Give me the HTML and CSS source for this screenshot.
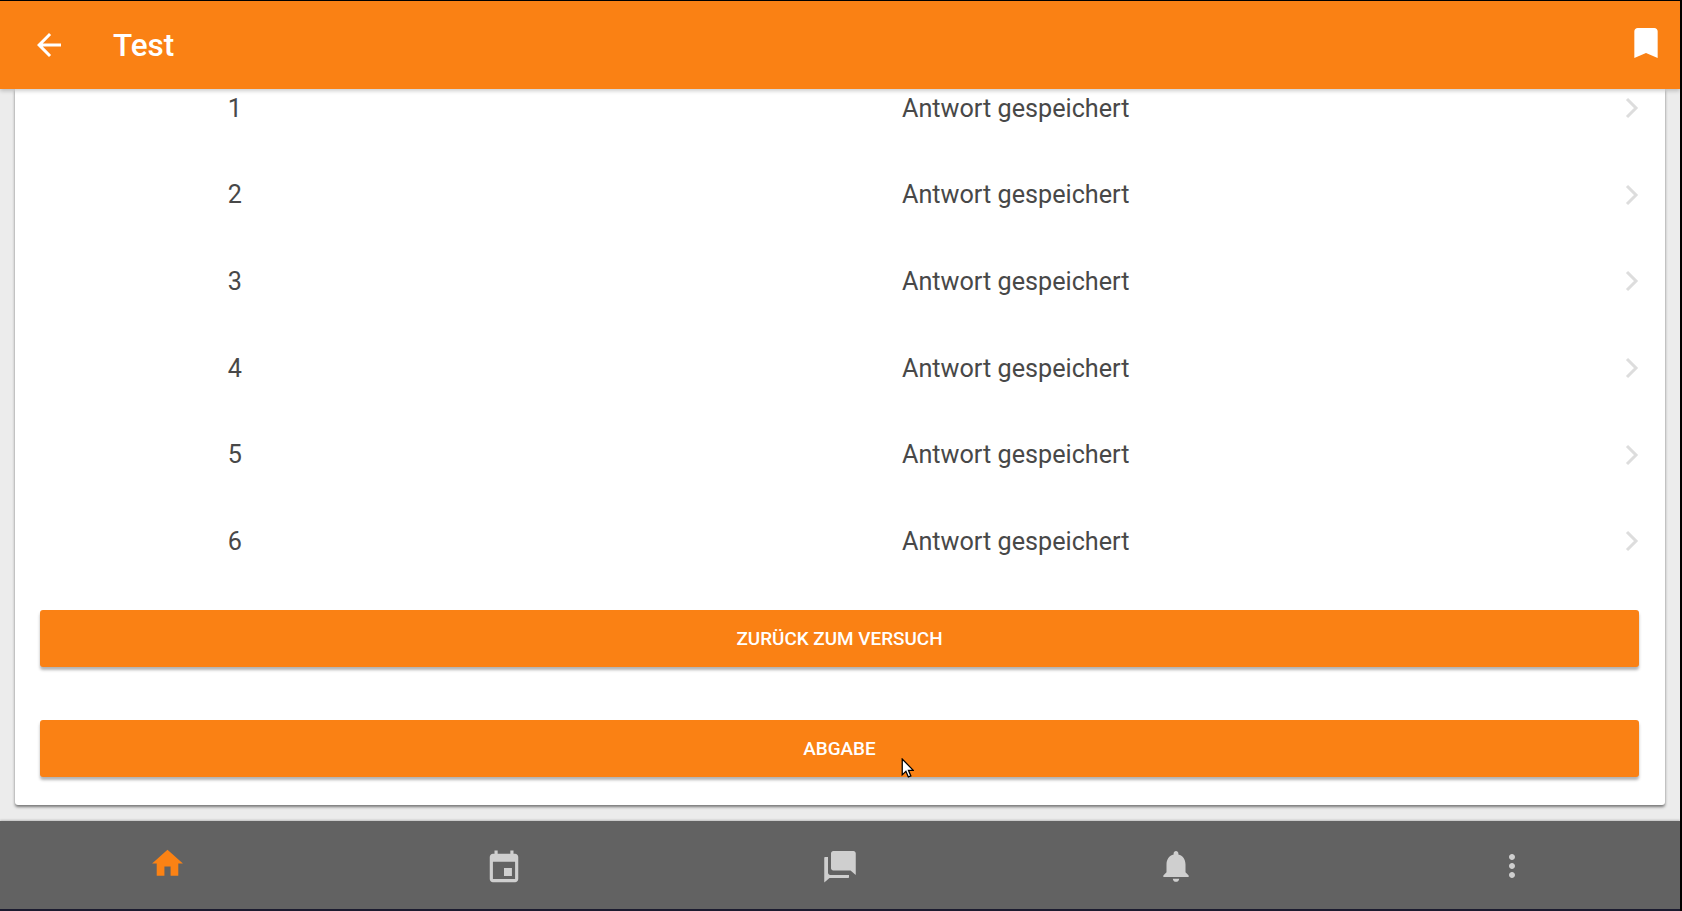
FILE: index.html
```html
<!DOCTYPE html>
<html lang="en">
<head>
    <meta charset="UTF-8">
    <meta name="viewport" content="width=device-width, initial-scale=1.0">
    <title>Test</title>
    <link rel="stylesheet" href="styles.css">
</head>
<body>
    <div class="screen">
        <div class="title-bar">
            <svg class="back-icon" viewBox="0 0 24 24"><path d="M20 11H7.830l5.590-5.590L12 4l-8 8 8 8 1.410-1.410L7.830 13H20v-2z"/></svg>
            <span class="title-text">Test</span>
            <svg class="bookmark-icon" viewBox="0 0 24 24"><path d="M17 3H7c-1.100 0-2 .9-2 2v16l7-3 7 3V5c0-1.100-.9-2-2-2z"/></svg>
        </div>

        <div class="content">
            <div class="card">
                <div class="row">
                    <span class="row-num">1</span>
                    <span class="row-status">Antwort gespeichert</span>
                    <svg class="chevron" viewBox="0 0 16 24"><path d="M3 3l9 9-9 9"/></svg>
                </div>
                <div class="row">
                    <span class="row-num">2</span>
                    <span class="row-status">Antwort gespeichert</span>
                    <svg class="chevron" viewBox="0 0 16 24"><path d="M3 3l9 9-9 9"/></svg>
                </div>
                <div class="row">
                    <span class="row-num">3</span>
                    <span class="row-status">Antwort gespeichert</span>
                    <svg class="chevron" viewBox="0 0 16 24"><path d="M3 3l9 9-9 9"/></svg>
                </div>
                <div class="row">
                    <span class="row-num">4</span>
                    <span class="row-status">Antwort gespeichert</span>
                    <svg class="chevron" viewBox="0 0 16 24"><path d="M3 3l9 9-9 9"/></svg>
                </div>
                <div class="row">
                    <span class="row-num">5</span>
                    <span class="row-status">Antwort gespeichert</span>
                    <svg class="chevron" viewBox="0 0 16 24"><path d="M3 3l9 9-9 9"/></svg>
                </div>
                <div class="row">
                    <span class="row-num">6</span>
                    <span class="row-status">Antwort gespeichert</span>
                    <svg class="chevron" viewBox="0 0 16 24"><path d="M3 3l9 9-9 9"/></svg>
                </div>
                <button class="action-button first">ZURÜCK ZUM VERSUCH</button>
                <button class="action-button">ABGABE</button>
            </div>
        </div>

        <div class="tab-bar">
            <div class="tab"><svg class="tab-icon active" viewBox="0 0 24 24"><path d="M10 20v-6h4v6h5v-8h3L12 3 2 12h3v8z"/></svg></div>
            <div class="tab"><svg class="tab-icon calendar" viewBox="0 0 24 24"><path d="M17 12h-5v5h5v-5zM16 1v2H8V1H6v2H5c-1.110 0-1.990.9-1.990 2L3 19c0 1.100.89 2 2 2h14c1.100 0 2-.9 2-2V5c0-1.100-.9-2-2-2h-1V1h-2zm3 18H5V8h14v11z"/></svg></div>
            <div class="tab"><svg class="tab-icon chat" viewBox="0 0 24 24"><path d="M6 3.500c0-.8.7-1.500 1.500-1.500H21c.8 0 1.500.7 1.500 1.500V18L19 15H7.500C6.700 15 6 14.300 6 13.500zM4 6v10.500c0 .8.7 1.500 1.500 1.500H18v1.500c0 .3-.2.5-.5.500H5l-3.500 3V6.500c0-.3.2-.5.5-.5z"/></svg></div>
            <div class="tab"><svg class="tab-icon bell" viewBox="0 0 24 24"><path d="M12 22c1.100 0 2-.9 2-2h-4c0 1.100.9 2 2 2zm6-6v-5c0-3.070-1.630-5.640-4.500-6.320V4c0-.83-.67-1.500-1.500-1.500s-1.500.67-1.500 1.500v.68C7.640 5.360 6 7.920 6 11v5l-2 2v1h16v-1l-2-2z"/></svg></div>
            <div class="tab"><svg class="tab-icon" viewBox="0 0 24 24"><path d="M12 8c1.100 0 2-.9 2-2s-.9-2-2-2-2 .9-2 2 .9 2 2 2zm0 2c-1.100 0-2 .9-2 2s.9 2 2 2 2-.9 2-2-.9-2-2-2zm0 6c-1.100 0-2 .9-2 2s.9 2 2 2 2-.9 2-2-.9-2-2-2z"/></svg></div>
        </div>

        <svg class="cursor" viewBox="0 0 12 19"><path d="M1 1v15l3.500-3.400 2.300 5.400 2.400-1-2.300-5.300H11.500z"/></svg>
    </div>
</body>
</html>
```

FILE: styles.css
```css
* {
    margin: 0;
    padding: 0;
    box-sizing: border-box;
}
body {
    font-family: 'Roboto', sans-serif;
    background-color: #000;
    height: 100vh;
    overflow: hidden;
}
.screen {
    position: relative;
    display: flex;
    flex-direction: column;
    width: 1680px;
    height: 910px;
    margin-top: 1px;
    background-color: #ececec;
    border-bottom: 2px solid #1c1c30;
}
.title-bar {
    display: flex;
    align-items: center;
    flex: 0 0 88px;
    padding: 0 14px 0 31px;
    background-color: #fa8114;
    color: #fff;
    box-shadow: 0 2px 4px rgba(0, 0, 0, 0.2);
    z-index: 2;
}
.back-icon {
    width: 36px;
    height: 36px;
    fill: #fff;
}
.title-text {
    margin-left: 46px;
    font-size: 31.5px;
    font-weight: 500;
    flex: 1;
}
.bookmark-icon {
    width: 40px;
    height: 40px;
    margin-top: -5px;
    fill: #fff;
}
.content {
    flex: 1;
    overflow: hidden;
    padding: 0 15px;
}
.card {
    display: flow-root;
    height: 716px;
    padding: 0 26px 0 25px;
    background-color: #fff;
    border-radius: 0 0 3px 3px;
    box-shadow: 0 2px 3px rgba(0, 0, 0, 0.5);
}
.row {
    display: flex;
    align-items: center;
    height: 86.6px;
    color: #484848;
    font-size: 25.2px;
}
.row:first-child {
    margin-top: -24px;
}
.row-num {
    width: 202px;
    margin-right: 660px;
    text-align: right;
}
.row-status {
    flex: 1;
}
.chevron {
    width: 16px;
    height: 24px;
    margin-right: -1px;
    fill: none;
    stroke: #ddd;
    stroke-width: 3;
}
.action-button {
    display: block;
    width: 100%;
    height: 57px;
    margin-top: 53px;
    background-color: #fa8114;
    color: #fff;
    border: none;
    border-radius: 3px;
    font-family: inherit;
    font-size: 18.900px;
    font-weight: 500;
    box-shadow: 0 3px 3px rgba(0, 0, 0, 0.3);
}
.action-button.first {
    margin-top: 25px;
}
.tab-bar {
    display: flex;
    flex: 0 0 88px;
    align-items: center;
    padding-top: 2px;
    background-color: #626262;
    box-shadow: 0 -1px 2px rgba(0, 0, 0, 0.2);
}
.tab {
    flex: 1;
    display: flex;
    justify-content: center;
}
.tab-icon {
    width: 36px;
    height: 36px;
    fill: #cfcfcf;
}
.tab-icon.active {
    width: 37px;
    height: 37px;
    fill: #fb8214;
    transform: translate(-1px, -3px);
}
.tab-icon.calendar {
    width: 38px;
    height: 38px;
    transform: translateY(2px);
}
.tab-icon.bell {
    width: 38px;
    height: 38px;
}
.cursor {
    position: absolute;
    left: 901px;
    top: 757px;
    width: 13px;
    height: 20px;
    fill: #fff;
    stroke: #000;
    stroke-width: 1.2;
}
```
